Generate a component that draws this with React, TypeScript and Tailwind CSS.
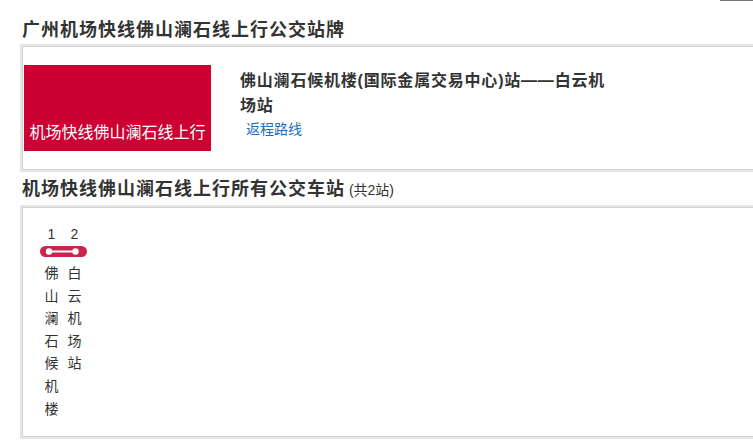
const stations = ["佛山澜石候机楼", "白云机场站"];

function RoutePill() {
  return (
    <svg width="47" height="11" viewBox="0 0 47 11" className="block">
      <rect x="0" y="0" width="47" height="11" rx="5.5" fill="#c8254f" />
      <line x1="9" y1="5.5" x2="35" y2="5.5" stroke="#fff" strokeWidth="2" />
      <circle cx="9" cy="5.5" r="3.2" fill="#fff" />
      <circle cx="35.5" cy="5.5" r="3.2" fill="#fff" />
    </svg>
  );
}

export default function App() {
  return (
    <div
      className="relative h-[446px] w-[753px] overflow-hidden bg-white text-[#333]"
      style={{ fontFamily: '"Liberation Sans", "Noto Sans CJK SC", sans-serif' }}
    >
      <div className="absolute right-0 top-0 h-px w-[33px] bg-[#777]" />

      <div className="pl-5 pt-[17px]">
        <h2 className="ml-[2px] text-[18px] font-bold leading-[26px] tracking-[1px]">
          广州机场快线佛山澜石线上行公交站牌
        </h2>

        <div className="mt-px w-[760px] border-2 border-[#e6e6e6]">
          <div className="flex h-[124px] border border-[#d4d4d4] bg-white">
            <div className="ml-px mt-[18px] flex h-[86px] w-[187px] items-end justify-center bg-[#cc0033] pb-[8px] text-[16px] leading-[20px] text-white">
              机场快线佛山澜石线上行
            </div>
            <div className="ml-[29px] w-[376px] pt-[21px]">
              <div className="text-[16px] font-bold leading-[25px] tracking-[0.8px]">
                佛山澜石候机楼(国际金属交易中心)站——白云机场站
              </div>
              <a className="ml-[6px] block text-[14px] leading-[22px] text-[#1a6fc4]">返程路线</a>
            </div>
          </div>
        </div>

        <h2 className="ml-[2px] mt-[4px] text-[18px] font-bold leading-[26px] tracking-[1px]">
          机场快线佛山澜石线上行所有公交车站
          <span className="text-[14px] font-normal tracking-normal"> (共2站)</span>
        </h2>

        <div className="mt-[2px] w-[760px] border-2 border-[#e6e6e6]">
          <div className="h-[230px] border border-[#d4d4d4] bg-white pl-[17px] pt-[17px]">
            <div className="flex">
              {stations.map((_, i) => (
                <div key={i} className="w-[23px] text-center text-[14px] leading-[18px]">
                  {i + 1}
                </div>
              ))}
            </div>
            <div className="mt-[3px]">
              <RoutePill />
            </div>
            <div className="mt-[5px] flex">
              {stations.map((name) => (
                <div key={name} className="flex w-[23px] flex-col items-center text-[14px] leading-[22.6px]">
                  {name.split("").map((ch, j) => (
                    <span key={j}>{ch}</span>
                  ))}
                </div>
              ))}
            </div>
          </div>
        </div>
      </div>
    </div>
  );
}
